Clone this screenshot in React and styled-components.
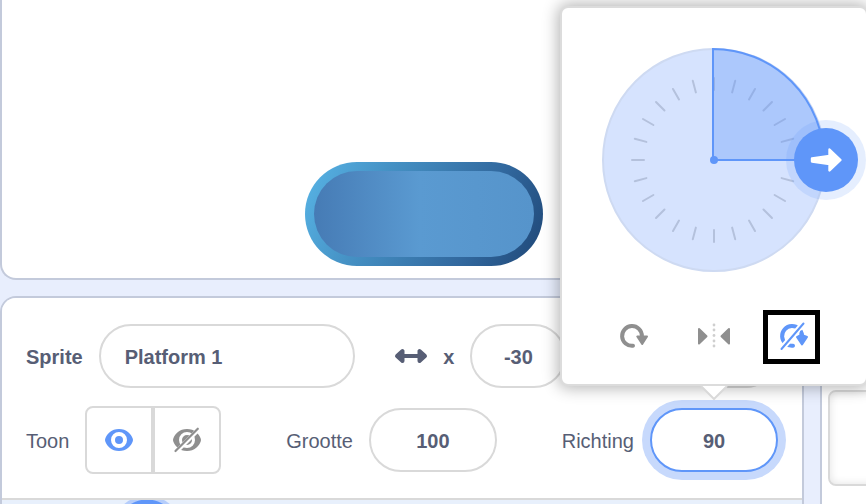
import React from 'react';
import styled, { createGlobalStyle, css } from 'styled-components';

const blue = '#5f96f9';
const ink = '#575e75';
const line = '#d9d9d9';
const edge = '#c3cadb';
const grey = '#8f8f8f';

const GlobalStyle = createGlobalStyle`
  * { box-sizing: border-box; }
  body {
    margin: 0;
    overflow: hidden;
    background: #e8eefd;
    color: ${ink};
    font-family: "Liberation Sans", Helvetica, Arial, sans-serif;
    font-size: 20px;
  }
`;

const Page = styled.div`
  display: flex;
  flex-direction: column;
  gap: 16px;
  min-height: 100vh;
`;

const Panes = styled.div`
  flex: 1;
  display: flex;
  gap: 16px;
`;

const Stage = styled.section`
  position: relative;
  min-height: 280px;
  background: #fff;
  border: 2px solid ${edge};
  border-width: 0 0 2px 2px;
  border-radius: 0 0 0 16px;
`;

const Platform = styled.svg`
  position: absolute;
  left: 302px;
  bottom: 11px;
  width: 240px;
  height: 106px;
`;

const SpritePane = styled.section`
  flex: 1;
  min-width: 0;
  display: flex;
  flex-direction: column;
  border: 2px solid ${edge};
  border-bottom: 0;
  border-radius: 16px 16px 0 0;
`;

const SpriteInfo = styled.form`
  display: flex;
  flex-direction: column;
  gap: 18px;
  padding: 26px 24px 24px;
  background: #fff;
  border-bottom: 2px solid ${line};
  border-radius: 14px 14px 0 0;
`;

const Row = styled.div`
  display: flex;
  align-items: center;
  justify-content: space-between;
`;

const Group = styled.div`
  display: flex;
  align-items: center;
  justify-content: flex-end;
  gap: 16px;
  min-width: ${(p) => p.$min || 'auto'};
`;

const Label = styled.label`
  padding-top: 2px;
  font-weight: ${(p) => (p.$bold ? 700 : 400)};
  line-height: 24px;
`;

const Field = styled.input`
  width: ${(p) => p.$width};
  height: 64px;
  padding: 2px ${(p) => (p.$left ? '24px' : '0')} 0;
  border: 2px solid ${line};
  border-radius: 32px;
  outline: none;
  background: #fff;
  color: ${ink};
  font: inherit;
  font-weight: 700;
  text-align: ${(p) => (p.$left ? 'left' : 'center')};
  ${(p) => p.$active && css`
    display: block;
    border-color: ${blue};
    box-shadow: 0 0 0 8px #c7d9fc;
  `}
`;

const Toggle = styled.div`
  display: flex;
`;

const ToggleButton = styled.button`
  display: grid;
  place-items: center;
  width: 68px;
  height: 68px;
  padding: 0;
  background: #fff;
  border: 2px solid ${line};
  border-radius: ${(p) => (p.$end ? '0 8px 8px 0' : '8px 0 0 8px')};
`;

const Icon = styled.svg`
  display: block;
  overflow: visible;
`;

const SpriteList = styled.div`
  flex: 1;
  min-height: 4px;
  background: radial-gradient(circle at 145px 30px, ${blue} 30px, #b5cdfb 31px, #b5cdfb 34px, #e8f0fc 35px);
`;

const StagePane = styled.aside`
  flex: 0 0 46px;
  overflow: hidden;
  padding: 92px 0 0 6px;
  background: #fff;
  border: 2px solid ${edge};
  border-width: 2px 0 0 2px;
  border-radius: 16px 0 0 0;
`;

const Backdrop = styled.div`
  width: 128px;
  height: 96px;
  border: 2px solid ${line};
  border-radius: 8px;
  box-shadow: inset 0 0 8px rgba(0, 0, 0, 0.12);
`;

const Anchor = styled.div`
  position: relative;
`;

const Popover = styled.div`
  position: absolute;
  z-index: 2;
  left: 50%;
  bottom: calc(100% + 22px);
  width: 308px;
  margin-left: -154px;
  padding: 40px 0 32px;
  display: flex;
  flex-direction: column;
  align-items: center;
  gap: 48px;
  background: #fff;
  border: 2px solid #dcdcdc;
  border-radius: 8px;
  box-shadow: 0 0 16px 2px rgba(0, 0, 0, 0.3);
`;

const Tail = styled.svg`
  position: absolute;
  top: calc(100% + 2px);
  left: 50%;
  margin-left: -14px;
`;

const Modes = styled.div`
  display: flex;
  gap: 48px;
`;

const ModeButton = styled.button`
  position: relative;
  display: grid;
  place-items: center;
  width: 32px;
  height: 32px;
  padding: 0;
  border: 0;
  background: none;
`;

const Marker = styled.span`
  position: absolute;
  inset: -10px -10px -12px -15px;
  border: 5px solid #000;
`;

const ticks = Array.from({ length: 24 }, (_, i) => i * 15);

function Dial() {
  return (
    <Icon width="224" height="224" viewBox="0 0 224 224" role="img" aria-label="Richting">
      <circle cx="112" cy="112" r="111" fill="#d6e3fe" stroke="#cedaf2" strokeWidth="2" />
      {ticks.map((a) => (
        <path key={a} d="M112 30V42" stroke="#b4c1dc" strokeWidth="2" strokeLinecap="round" transform={`rotate(${a} 112 112)`} />
      ))}
      <path d="M111 112V1A111 111 0 0 1 222 112Z" fill={blue} fillOpacity=".35" stroke={blue} strokeWidth="2" />
      <circle cx="112" cy="112" r="4" fill={blue} />
      <circle cx="224" cy="112" r="40" fill={blue} fillOpacity=".16" />
      <circle cx="224" cy="112" r="32" fill={blue} />
      <path d="M210 110.500L227.500 108V101.500L238.500 112L227.500 122.500V116L210 113.500Z" fill="#fff" stroke="#fff" strokeWidth="2.400" strokeLinejoin="round" />
    </Icon>
  );
}

function Turn({ color, off }) {
  return (
    <Icon width="28" height="28" viewBox="0 0 28 28" aria-hidden="true">
      <path d="M13 23.800A9.900 9.900 0 1 1 21.900 14" fill="none" stroke={color} strokeWidth="4" strokeLinecap="round" />
      {!off && <path d="M17.300 14.500H27L22.200 22Z" fill={color} stroke={color} strokeWidth="2" strokeLinejoin="round" />}
      {off && <path d="M0 28.500L24 1" stroke="#fff" strokeWidth="6" />}
      {off && <path d="M17 15L20.500 13L21 9.500H22L23 13.500L27 15L22 22.500Z" fill={color} stroke={color} strokeWidth="2" strokeLinejoin="round" />}
      {off && <path d="M1.500 27L23.500 1.500" stroke={color} strokeWidth="2" strokeLinecap="round" />}
    </Icon>
  );
}

function Mirror() {
  return (
    <Icon width="32" height="28" viewBox="0 0 32 28" aria-hidden="true">
      <path d="M1 7L8.500 14.200L1 21.500ZM31 7L23.500 14.200L31 21.500Z" fill={grey} stroke={grey} strokeWidth="2" strokeLinejoin="round" />
      {[3, 8, 13.5, 19, 24].map((y) => <circle key={y} cx="16" cy={y} r="1.400" fill="#cfcfcf" />)}
    </Icon>
  );
}

function Eye({ color, off }) {
  return (
    <Icon width="28" height="24" viewBox="0 0 28 24" aria-hidden="true">
      <path d="M14 1C6.500 1 2 6 .3 10.500Q-.3 12 .3 13.500C2 18 6.500 23 14 23S26 18 27.700 13.500Q28.300 12 27.700 10.500C26 6 21.500 1 14 1Z" fill={color} />
      <circle cx="14" cy="12" r={off ? 6.5 : 6} fill={color} stroke="#fff" strokeWidth={off ? 3 : 4} />
      {off && <path d="M2.500 24.500L26.500 .5" stroke="#fff" strokeWidth="4.500" />}
      {off && <path d="M2.500 23L24.800 .7" stroke={color} strokeWidth="2.200" strokeLinecap="round" />}
    </Icon>
  );
}

export default function App() {
  return (
    <>
      <GlobalStyle />
      <Page>
        <Stage>
          <Platform viewBox="0 0 240 106" aria-hidden="true">
            <defs>
              <linearGradient id="rim" x1="0" y1=".4" x2="1" y2=".6">
                <stop offset="0" stopColor="#54addf" />
                <stop offset=".28" stopColor="#4591c4" />
                <stop offset=".75" stopColor="#31679d" />
                <stop offset="1" stopColor="#234e7f" />
              </linearGradient>
              <linearGradient id="face">
                <stop offset="0" stopColor="#467bb5" />
                <stop offset=".48" stopColor="#5a9ad1" />
                <stop offset="1" stopColor="#5694cb" />
              </linearGradient>
            </defs>
            <rect x="1" y="1" width="238" height="104" rx="52" fill="url(#rim)" />
            <rect x="10" y="10" width="220" height="86" rx="43" fill="url(#face)" />
          </Platform>
        </Stage>
        <Panes>
          <SpritePane>
            <SpriteInfo>
              <Row>
                <Group>
                  <Label $bold htmlFor="name">Sprite</Label>
                  <Field id="name" $width="256px" $left defaultValue="Platform 1" />
                </Group>
                <Group $min="172px">
                  <Icon width="32" height="16" viewBox="0 0 32 16" aria-hidden="true">
                    <path d="M7 8H25" stroke={ink} strokeWidth="4" />
                    <path d="M2 8L7.500 3V13ZM30 8L24.500 3V13Z" fill={ink} stroke={ink} strokeWidth="4" strokeLinejoin="round" />
                  </Icon>
                  <Label $bold htmlFor="x">x</Label>
                  <Field id="x" $width="96px" defaultValue="-30" />
                </Group>
                <Group $min="172px">
                  <Field $width="96px" aria-label="y" />
                </Group>
              </Row>
              <Row>
                <Group>
                  <Label as="span" id="show">Toon</Label>
                  <Toggle role="group" aria-labelledby="show">
                    <ToggleButton type="button" aria-label="Toon" aria-pressed="true"><Eye color={blue} /></ToggleButton>
                    <ToggleButton type="button" $end aria-label="Verberg" aria-pressed="false"><Eye color={grey} off /></ToggleButton>
                  </Toggle>
                </Group>
                <Group>
                  <Label htmlFor="size">Grootte</Label>
                  <Field id="size" $width="128px" defaultValue="100" />
                </Group>
                <Group>
                  <Label htmlFor="direction">Richting</Label>
                  <Anchor>
                    <Field id="direction" $width="128px" $active defaultValue="90" />
                    <Popover>
                      <Dial />
                      <Modes>
                        <ModeButton type="button" aria-label="Rondom"><Turn color={grey} /></ModeButton>
                        <ModeButton type="button" aria-label="Links/rechts"><Mirror /></ModeButton>
                        <ModeButton type="button" aria-label="Niet draaien" aria-pressed="true">
                          <Turn color={blue} off />
                          <Marker />
                        </ModeButton>
                      </Modes>
                      <Tail width="28" height="14" viewBox="0 0 28 14" aria-hidden="true">
                        <path d="M1 0L14 13L27 0" fill="#fff" stroke={line} strokeWidth="2" />
                      </Tail>
                    </Popover>
                  </Anchor>
                </Group>
              </Row>
            </SpriteInfo>
            <SpriteList />
          </SpritePane>
          <StagePane><Backdrop /></StagePane>
        </Panes>
      </Page>
    </>
  );
}
